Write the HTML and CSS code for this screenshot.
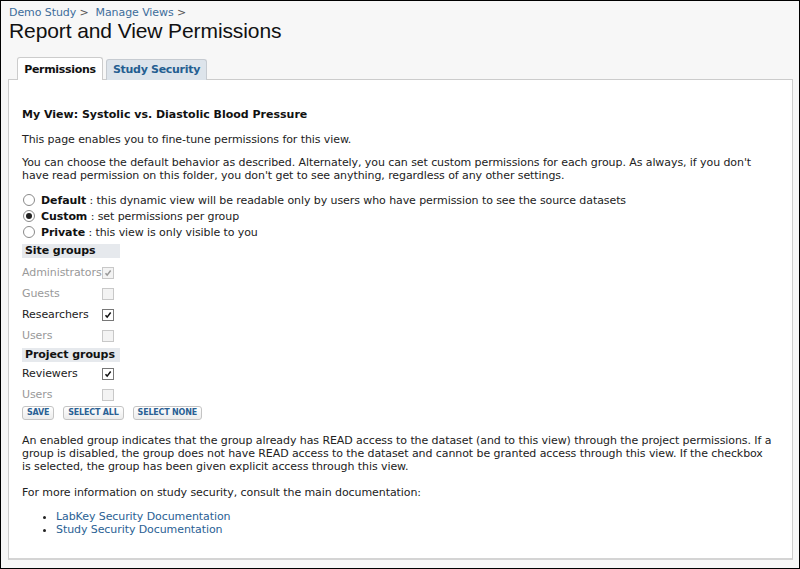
FILE: index.html
```html
<!DOCTYPE html>
<html lang="en">
<head>
  <meta charset="UTF-8">
  <title>Report and View Permissions</title>
  <link rel="stylesheet" href="styles.css">
</head>
<body>
<div class="frame">
  <div class="crumbs"><a href="#">Demo Study</a> &gt; &nbsp;<a href="#">Manage Views</a> &gt;</div>
  <h1>Report and View Permissions</h1>

  <div class="tabs">
    <span class="tab active">Permissions</span>
    <span class="tab">Study Security</span>
  </div>

  <div class="panel">
    <h3>My View: Systolic vs. Diastolic Blood Pressure</h3>
    <p class="intro">This page enables you to fine-tune permissions for this view.</p>
    <p class="desc">You can choose the default behavior as described. Alternately, you can set custom permissions for each group. As always, if you don't have read permission on this folder, you don't get to see anything, regardless of any other settings.</p>

    <div class="radios">
      <div class="radio-row"><span class="radio"></span><b>Default</b>&nbsp;: this dynamic view will be readable only by users who have permission to see the source datasets</div>
      <div class="radio-row"><span class="radio on"></span><b>Custom</b>&nbsp;: set permissions per group</div>
      <div class="radio-row"><span class="radio"></span><b>Private</b>&nbsp;: this view is only visible to you</div>
    </div>

    <table class="groups">
      <tr><th colspan="2">Site groups</th></tr>
      <tr class="off first"><td>Administrators</td><td><span class="box"><svg viewBox="0 0 12 12"><path d="M3 6.2 L5 8.5 L9.2 3" /></svg></span></td></tr>
      <tr class="off"><td>Guests</td><td><span class="box"></span></td></tr>
      <tr><td>Researchers</td><td><span class="box"><svg viewBox="0 0 12 12"><path d="M3 6.2 L5 8.5 L9.2 3" /></svg></span></td></tr>
      <tr class="off"><td>Users</td><td><span class="box"></span></td></tr>
      <tr><th colspan="2" class="sub">Project groups</th></tr>
      <tr class="first-sub"><td>Reviewers</td><td><span class="box"><svg viewBox="0 0 12 12"><path d="M3 6.2 L5 8.5 L9.2 3" /></svg></span></td></tr>
      <tr class="off"><td>Users</td><td><span class="box"></span></td></tr>
    </table>

    <div class="buttons">
      <a class="btn" href="#">Save</a>
      <a class="btn" href="#">Select All</a>
      <a class="btn" href="#">Select None</a>
    </div>

    <p class="note">An enabled group indicates that the group already has READ access to the dataset (and to this view) through the project permissions. If a group is disabled, the group does not have READ access to the dataset and cannot be granted access through this view. If the checkbox is selected, the group has been given explicit access through this view.</p>
    <p class="more">For more information on study security, consult the main documentation:</p>
    <ul class="docs">
      <li><a href="#">LabKey Security Documentation</a></li>
      <li><a href="#">Study Security Documentation</a></li>
    </ul>
  </div>
</div>
</body>
</html>
```

FILE: styles.css
```css
body {
  margin: 0;
  font-family: "DejaVu Sans", Verdana, sans-serif;
  font-size: 11px;
  line-height: 13px;
  letter-spacing: -0.08px;
  color: #222;
}
a {
  color: #2a6194;
  text-decoration: none;
}
.frame {
  height: 569px;
  box-sizing: border-box;
  border: 1px solid #000;
  background: #f7f7f7;
  padding: 0 6px 8px 7px;
  display: flex;
  flex-direction: column;
}
.crumbs {
  margin-top: 5px;
  color: #555;
  padding-left: 1px;
}
.crumbs a {
  color: #3d6d9b;
}
h1 {
  margin: 0 0 0 1px;
  font-family: "Liberation Sans", Arial, sans-serif;
  font-weight: normal;
  font-size: 21px;
  line-height: 24px;
  letter-spacing: -0.1px;
  color: #111;
}
.tabs {
  display: flex;
  align-items: flex-end;
  gap: 3px;
  margin: 15px 0 -1px 9px;
  height: 22px;
  position: relative;
  z-index: 1;
}
.tab {
  font-weight: bold;
  width: 99px;
  text-align: center;
  height: 20px;
  line-height: 20px;
  border: 1px solid #c6cbd1;
  border-bottom: none;
  border-radius: 3px 3px 0 0;
  background: #dde4eb;
  color: #245e91;
  letter-spacing: -0.3px;
}
.tab.active {
  width: 84px;
  height: 22px;
  line-height: 23px;
  background: #fff;
  color: #111;
  border-color: #ccc;
}
.panel {
  flex: 1;
  background: #fff;
  border: 1px solid #ccc;
  border-bottom: 2px solid #d4d4d4;
  padding: 28px 18px 0 13px;
}
h3 {
  margin: 0;
  font-size: 11px;
  line-height: 13px;
  letter-spacing: 0;
  color: #111;
}
p {
  margin: 0;
}
.intro {
  margin-top: 12px;
}
.desc {
  margin-top: 10px;
}
.radios {
  margin-top: 10px;
}
.radio-row {
  height: 16px;
  display: flex;
  align-items: center;
}
.radio-row b {
  color: #111;
}
.radio {
  width: 10px;
  height: 10px;
  border: 1px solid #8a8a8a;
  border-radius: 50%;
  margin: 0 6px 0 1px;
  background: #fff;
  position: relative;
}
.radio.on::after {
  content: "";
  position: absolute;
  left: 2px;
  top: 2px;
  width: 6px;
  height: 6px;
  border-radius: 50%;
  background: #222;
}
.groups {
  margin-top: 4px;
  border-collapse: collapse;
  width: 98px;
}
.groups th {
  text-align: left;
  background: #e6e9ed;
  height: 14px;
  padding: 0 3px;
  line-height: 14px;
  color: #111;
}
.groups th.sub {
  border-top: 2px solid #fff;
}
.groups td {
  height: 21px;
  padding: 0;
  white-space: nowrap;
}
.groups td:first-child {
  width: 80px;
}
.groups tr.first td {
  padding-top: 4px;
}
.groups tr.first-sub td {
  padding-top: 1px;
}
.groups tr.off td {
  color: #999;
}
.box {
  display: block;
  width: 10px;
  height: 10px;
  border: 1px solid #777;
  background: #fff;
}
.box svg {
  display: block;
  width: 10px;
  height: 10px;
}
.box path {
  fill: none;
  stroke: #111;
  stroke-width: 1.8;
}
.off .box {
  border-color: #c8c8c8;
  background: #f3f3f3;
}
.off .box path {
  stroke: #999;
}
.buttons {
  display: flex;
  gap: 9px;
  margin-top: 1px;
}
.btn {
  display: block;
  height: 12px;
  line-height: 12px;
  padding: 0 4px;
  border: 1px solid #c4c4c4;
  border-radius: 3px;
  background: linear-gradient(#fff, #ececec);
  font-size: 8px;
  font-weight: bold;
  text-transform: uppercase;
  color: #2a6194;
  letter-spacing: -0.2px;
}
.note {
  margin-top: 14px;
}
.more {
  margin-top: 13px;
}
.docs {
  margin: 11px 0 0;
  padding-left: 34px;
}
.docs li {
  line-height: 13px;
}
```
